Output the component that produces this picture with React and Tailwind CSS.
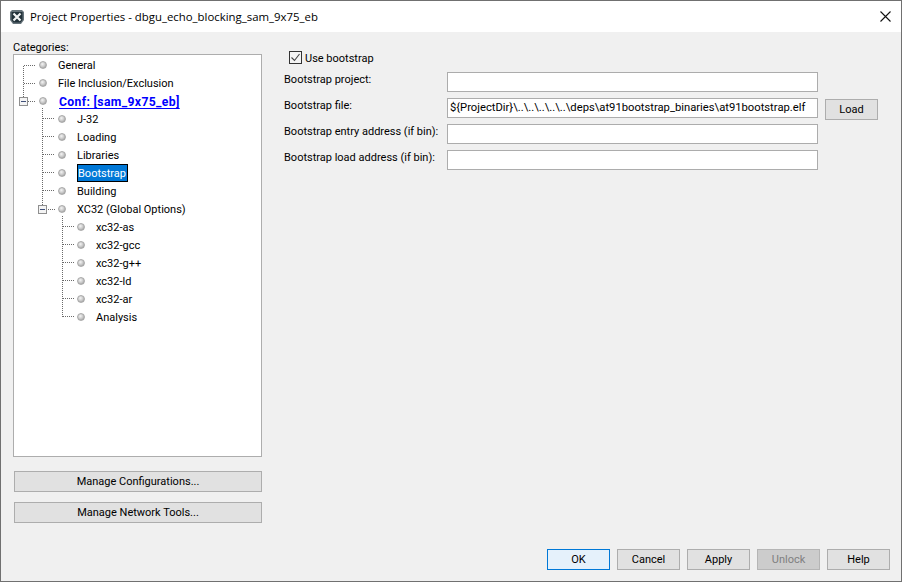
const font = { fontFamily: '"Open Sans", "Noto Sans", sans-serif' };
const ui = { fontFamily: 'Roboto, "Open Sans", sans-serif' };

function Bullet() {
  return <span className="block w-[8px] h-[8px] rounded-full shrink-0 border border-[#a9a9a9] bg-[radial-gradient(circle_at_40%_35%,#f4f4f4_0%,#c8c8c8_50%,#8e8e8e_100%)]" />;
}

function Row({ level, children, bold, selected }) {
  const indent = level === 0 ? "pl-[25px]" : level === 1 ? "pl-[44px]" : "pl-[63px]";
  return (
    <div className={`flex items-center h-[18px] ${indent}`}>
      <div className="-mt-px"><Bullet /></div>
      <span className="w-[11px]" />
      {selected ? (
        <span className="h-[18px] w-[51px] flex items-center border border-black bg-[#0078d7] text-white">
          <span className="mt-[2px]">{children}</span>
        </span>
      ) : bold ? (
        <span className="ml-px mt-[2px] font-bold text-[12.2px] tracking-[0.35px] text-[#0000ff] underline underline-offset-2">{children}</span>
      ) : (
        <span className="mt-[2px]">{children}</span>
      )}
    </div>
  );
}

function TreeLines() {
  const dots = { stroke: "#6a6a6a", strokeWidth: 1, strokeDasharray: "1 1", fill: "none" };
  const h1 = [119, 137, 155, 173, 191];
  const h2 = [227, 245, 263, 281, 299, 317];
  return (
    <svg className="absolute left-0 top-0" width="247" height="401" viewBox="14 55 247 401">
      <path d="M23.5 66V97M24 65.5H35M24 83.5H35M28 101.5H35" {...dots} />
      <path d="M42.5 108V205M48 209.5H55" {...dots} />
      {h1.map((y) => <path key={y} d={`M43 ${y - 0.5}H55`} {...dots} />)}
      <path d="M62.5 216V317" {...dots} />
      {h2.map((y) => <path key={y} d={`M63 ${y - 0.5}H74`} {...dots} />)}
      {[[19, 97], [38, 205]].map(([x, y]) => (
        <g key={x}>
          <rect x={x + 0.5} y={y + 0.5} width="8" height="8" fill="#f4f4f4" stroke="#8f8f8f" />
          <path d={`M${x + 2} ${y + 4.5}H${x + 7}`} stroke="#40507a" />
        </g>
      ))}
    </svg>
  );
}

function Btn({ w, h = "h-[21px]", children, variant }) {
  const cls =
    variant === "focus"
      ? "border-[#0078d7] bg-[#e5f1fb] text-black"
      : variant === "disabled"
      ? "border-[#b5b5b5] bg-[#cccccc] text-[#7f7f7f]"
      : "border-[#adadad] bg-[#e1e1e1] text-black";
  return <div className={`flex items-center justify-center border pt-[2px] whitespace-nowrap ${cls} ${w} ${h}`}>{children}</div>;
}

function Field({ label, value }) {
  return (
    <div className="flex h-[26px]">
      <span className="w-[163px] shrink-0 -mt-[2px] leading-[20px] whitespace-nowrap">{label}</span>
      <div className="w-[371px] h-[20px] border border-[#acacac] bg-white pl-[2px] flex items-center whitespace-nowrap overflow-hidden text-[11.22px]">{value}</div>
    </div>
  );
}

function Logo() {
  return (
    <svg width="16" height="16" viewBox="0 0 16 16" className="shrink-0">
      <path d="M3 1h10l2 2v8l-3 4H4l-3-4V3z" fill="#66737a" />
      <path d="M2.5 3h11v8l-2 2.5h-7l-2-2.5z" fill="#22323a" />
      <path d="M4.5 4.5l7 7M11.5 4.5l-7 7" stroke="#f2f4f5" strokeWidth="2.2" />
    </svg>
  );
}

export default function App() {
  return (
    <div style={font} className="w-[902px] h-[582px] flex flex-col border border-[#707070] bg-[#f0f0f0] text-[11.4px] text-black overflow-hidden">
      <div className="h-[31px] shrink-0 bg-white flex items-center pl-[8px] pr-[10px]">
        <Logo />
        <span className="ml-[5px] flex-1 whitespace-nowrap">Project Properties - dbgu_echo_blocking_sam_9x75_eb</span>
        <svg width="11" height="11" viewBox="0 0 11 11"><path d="M.5.5l10 10M10.5.5l-10 10" stroke="#111" strokeWidth="1.1" fill="none" /></svg>
      </div>

      <div style={ui} className="flex-1 flex flex-col text-[11px]">
        <div className="flex flex-1 pl-[12px]">
          <div className="w-[249px] flex flex-col">
            <div className="h-[22px] pt-[8px] leading-[16px]">Categories:</div>
            <div className="relative h-[403px] border border-[#adadad] bg-white pt-[1px]">
              <TreeLines />
              <div className="relative">
                <Row level={0}>General</Row>
                <Row level={0}>File Inclusion/Exclusion</Row>
                <Row level={0} bold>Conf: [sam_9x75_eb]</Row>
                <Row level={1}>J-32</Row>
                <Row level={1}>Loading</Row>
                <Row level={1}>Libraries</Row>
                <Row level={1} selected>Bootstrap</Row>
                <Row level={1}>Building</Row>
                <Row level={1}>XC32 (Global Options)</Row>
                <Row level={2}>xc32-as</Row>
                <Row level={2}>xc32-gcc</Row>
                <Row level={2}>xc32-g++</Row>
                <Row level={2}>xc32-ld</Row>
                <Row level={2}>xc32-ar</Row>
                <Row level={2}>Analysis</Row>
              </div>
            </div>
            <div className="mt-[14px] ml-px flex flex-col gap-[10px]">
              <Btn w="w-[248px]">Manage Configurations...</Btn>
              <Btn w="w-[248px]">Manage Network Tools...</Btn>
            </div>
          </div>

          <div className="ml-[22px] pt-[19px]">
            <div className="flex items-center h-[13px] ml-[5px] gap-[3px]">
              <span className="w-[13px] h-[13px] border border-[#333] bg-[#f4f4f4] flex items-center justify-center">
                <svg width="11" height="11" viewBox="0 0 11 11"><path d="M1.5 5.5l3 3 5-6.5" stroke="#444" strokeWidth="1.1" fill="none" /></svg>
              </span>
              <span className="whitespace-nowrap mt-[3px]">Use bootstrap</span>
            </div>
            <div className="mt-[8px] w-[600px]">
              <Field label="Bootstrap project:" />
              <div className="flex">
                <Field label="Bootstrap file:" value={"${ProjectDir}\\..\\..\\..\\..\\..\\deps\\at91bootstrap_binaries\\at91bootstrap.elf"} />
                <div className="ml-[7px] mt-px"><Btn w="w-[53px]">Load</Btn></div>
              </div>
              <Field label="Bootstrap entry address (if bin):" />
              <Field label="Bootstrap load address (if bin):" />
            </div>
          </div>
        </div>

        <div className="flex justify-end gap-[7px] pr-[11px] pb-[11px]">
          <Btn w="w-[63px]" variant="focus">OK</Btn>
          <Btn w="w-[63px]">Cancel</Btn>
          <Btn w="w-[63px]">Apply</Btn>
          <Btn w="w-[63px]" variant="disabled">Unlock</Btn>
          <Btn w="w-[63px]">Help</Btn>
        </div>
      </div>
    </div>
  );
}
